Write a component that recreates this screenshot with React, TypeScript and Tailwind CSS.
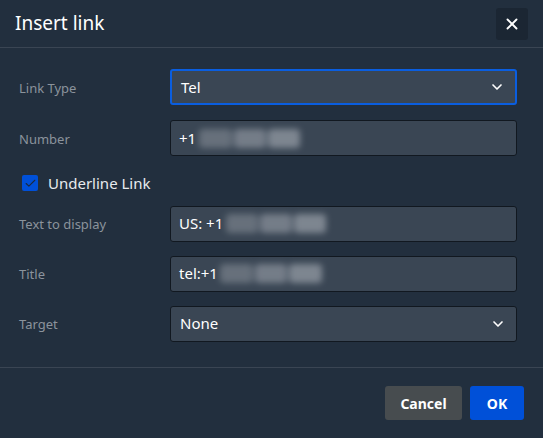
import React from 'react';
import { ChevronDown, X, Check } from 'lucide-react';

const font = { fontFamily: '"Noto Sans", "Open Sans", sans-serif' };

// blurred phone digits
function Blur({ w }: { w: string }) {
  return (
    <span className={`inline-flex h-[19px] ${w} gap-[2px] blur-[3px] opacity-90`}>
      <span className="flex-1 bg-[#6c7580] rounded-sm" />
      <span className="flex-1 bg-[#7b838e] rounded-sm" />
      <span className="flex-1 bg-[#858d97] rounded-sm" />
    </span>
  );
}

function Row({ label, children }: { label: string; children: React.ReactNode }) {
  return (
    <div className="flex items-center">
      <label className="w-[151px] shrink-0 pt-[3px] text-[13px] text-[#8b939c]">{label}</label>
      {children}
    </div>
  );
}

function Field({ children, focus }: { children: React.ReactNode; focus?: boolean }) {
  return (
    <div
      className={`flex-1 h-[36px] flex items-center px-[8px] rounded-[3px] bg-[#3a4654] text-[15px] text-white ${
        focus ? 'border-2 border-[#0a5ee0] px-[7px]' : 'border border-[#111820]'
      }`}
    >
      {children}
    </div>
  );
}

export default function App() {
  return (
    <div className="w-[543px] h-[438px] bg-[#222f3e] flex flex-col" style={font}>
      <header className="h-[48px] flex items-center justify-between pl-[15px] pr-[15px] border-b border-[#3a4553]">
        <h1 className="text-[19px] text-white">Insert link</h1>
        <button className="w-[32px] h-[32px] bg-[#1b2633] rounded-[3px] flex items-center justify-center text-white">
          <X size={18} strokeWidth={2.5} />
        </button>
      </header>

      <div className="flex-1 flex flex-col pl-[19px] pr-[26px] pt-[21px] border-b border-[#3a4553]">
        <Row label="Link Type">
          <Field focus>
            <span className="flex-1 pl-[1px]">Tel</span>
            <ChevronDown size={16} strokeWidth={2.5} className="text-white mr-[2px]" />
          </Field>
        </Row>

        <div className="mt-[15px]">
          <Row label="Number">
            <Field>
              <span>+1</span>
              <Blur w="w-[101px] ml-[3px]" />
            </Field>
          </Row>
        </div>

        <div className="mt-[16px] flex items-center gap-[10px] pl-[3px]">
          <span className="w-[16px] h-[16px] bg-[#0050d8] rounded-[2px] flex items-center justify-center">
            <Check size={13} strokeWidth={2} className="text-[#1c2a3c]" />
          </span>
          <span className="text-[15px] text-[#e8ebee]">Underline Link</span>
        </div>

        <div className="mt-[11px] flex flex-col gap-[14px]">
          <Row label="Text to display">
            <Field>
              <span>US: +1</span>
              <Blur w="w-[100px] ml-[3px]" />
            </Field>
          </Row>
          <Row label="Title">
            <Field>
              <span>tel:+1</span>
              <Blur w="w-[102px] ml-[2px]" />
            </Field>
          </Row>
          <Row label="Target">
            <Field>
              <span className="flex-1 pl-[1px]">None</span>
              <ChevronDown size={16} strokeWidth={2.5} className="text-white mr-[2px]" />
            </Field>
          </Row>
        </div>
      </div>

      <footer className="h-[70px] flex items-center justify-end gap-[8px] pr-[19px]">
        <button className="h-[34px] w-[77px] bg-[#474c4f] rounded-[3px] text-[14px] font-bold text-white">
          Cancel
        </button>
        <button className="h-[34px] w-[54px] bg-[#0050d8] rounded-[3px] text-[14px] font-bold text-white">
          OK
        </button>
      </footer>
    </div>
  );
}
